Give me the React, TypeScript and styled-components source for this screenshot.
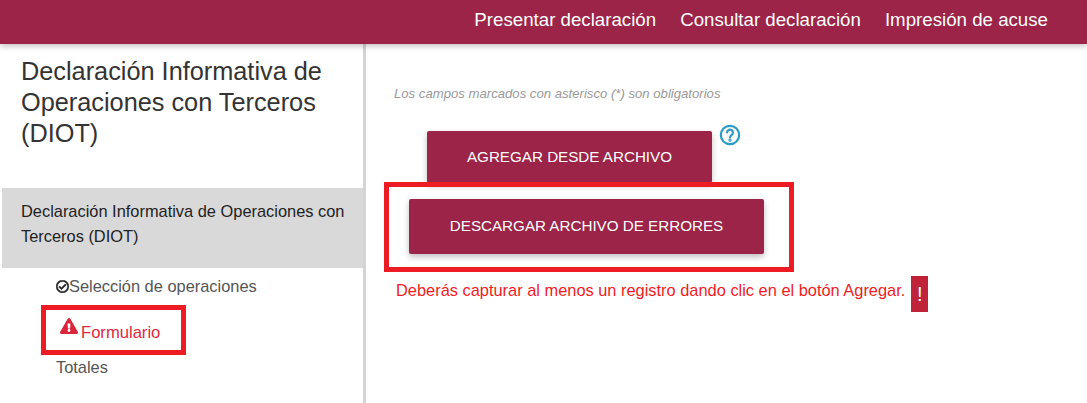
import React from 'react';
import styled, { createGlobalStyle } from 'styled-components';
import { FaExclamationTriangle, FaRegCheckCircle } from 'react-icons/fa';

const GlobalStyle = createGlobalStyle`
  html, body {
    margin: 0;
    padding: 0;
    background: #fff;
    overflow: hidden;
  }
  body {
    font-family: "Liberation Sans", Arial, sans-serif;
  }
`;

const Page = styled.div`
  width: 1087px;
  height: 403px;
  display: flex;
  flex-direction: column;
`;

const Header = styled.header`
  height: 44px;
  flex: none;
  background: #9b2448;
  box-shadow: 0 2px 6px rgba(0, 0, 0, 0.25);
  display: flex;
  justify-content: flex-end;
  align-items: center;
  gap: 24px;
  padding: 0 39px 4px 0;
  box-sizing: border-box;
  position: relative;
`;

const NavLink = styled.a`
  color: #fff;
  font-size: 18.7px;
`;

const Body = styled.div`
  flex: 1;
  display: flex;
  min-height: 0;
`;

const Sidebar = styled.aside`
  width: 366px;
  flex: none;
  box-sizing: border-box;
  border-right: 3px solid #d4d4d4;
  padding: 12px 0 0 2px;
`;

const Title = styled.h1`
  margin: 0 0 39px 19px;
  font-size: 25.3px;
  line-height: 31px;
  font-weight: 400;
  color: #333;
`;

const ActiveSection = styled.div`
  background: #d9d9d9;
  height: 80px;
  box-sizing: border-box;
  padding: 11px 12px 0 19px;
  font-size: 16.4px;
  line-height: 25px;
  color: #222;
`;

const StepList = styled.div`
  padding: 8px 0 0 39px;
`;

const Step = styled.div`
  display: flex;
  align-items: center;
  height: 20px;
  padding-left: 15px;
  font-size: 16.4px;
  color: #555;
`;

const CheckIcon = styled(FaRegCheckCircle)`
  width: 13px;
  height: 13px;
  flex: none;
  color: #222;
  stroke: #222;
  stroke-width: 24;
`;

const ErrorBox = styled.div`
  width: 145px;
  height: 50px;
  box-sizing: border-box;
  border: 5px solid #ed1c24;
  margin: 9px 0 2px;
  padding: 8px 0 0 14px;
  display: flex;
  align-items: flex-start;
  gap: 3px;
  color: #e0293f;
  font-size: 16.6px;
`;

const WarnIcon = styled(FaExclamationTriangle)`
  width: 18px;
  height: 16px;
  color: #d9263c;
`;

const ErrorLabel = styled.span`
  margin-top: 5px;
`;

const Main = styled.main`
  flex: 1;
  padding: 43px 0 0 18px;
`;

const Hint = styled.p`
  margin: 0 0 30px 10px;
  font-size: 13.15px;
  line-height: 14px;
  font-style: italic;
  color: #999;
`;

const TopAction = styled.div`
  display: flex;
  align-items: flex-start;
  margin-left: 43px;
  height: 51px;
`;

const ActionButton = styled.button<{ $width: number; $height: number }>`
  width: ${(p) => p.$width}px;
  height: ${(p) => p.$height}px;
  flex: none;
  background: #9b2448;
  color: #fff;
  border: none;
  border-radius: 2px;
  box-shadow: 0 3px 6px rgba(0, 0, 0, 0.25);
  font-family: "Liberation Sans", Arial, sans-serif;
  font-size: 15.2px;
  padding: 0 0 2px;
`;

const HelpIcon = styled.svg`
  width: 22px;
  height: 22px;
  margin: -7px 0 0 7px;
`;

const DownloadBox = styled.div`
  position: relative;
  width: 410px;
  height: 90px;
  box-sizing: border-box;
  border: 5px solid #ed1c24;
  padding: 12px 0 0 20px;
`;

const ErrorMessage = styled.div`
  display: flex;
  align-items: flex-start;
  margin: 4px 0 0 12px;
  color: #f01c24;
  font-size: 16.4px;
`;

const MessageText = styled.span`
  margin-top: 5px;
`;

const Badge = styled.span`
  width: 17px;
  height: 36px;
  margin-left: 6px;
  background: #c0223a;
  color: #fff;
  font-size: 20px;
  display: flex;
  align-items: center;
  justify-content: center;
`;

export default function App() {
  return (
    <Page>
      <GlobalStyle />
      <Header>
        <NavLink>Presentar declaración</NavLink>
        <NavLink>Consultar declaración</NavLink>
        <NavLink>Impresión de acuse</NavLink>
      </Header>
      <Body>
        <Sidebar>
          <Title>
            Declaración Informativa de
            <br />
            Operaciones con Terceros
            <br />
            (DIOT)
          </Title>
          <ActiveSection>
            Declaración Informativa de Operaciones con Terceros (DIOT)
          </ActiveSection>
          <StepList>
            <Step>
              <CheckIcon />
              Selección de operaciones
            </Step>
            <ErrorBox>
              <WarnIcon />
              <ErrorLabel>Formulario</ErrorLabel>
            </ErrorBox>
            <Step>Totales</Step>
          </StepList>
        </Sidebar>
        <Main>
          <Hint>Los campos marcados con asterisco (*) son obligatorios</Hint>
          <TopAction>
            <ActionButton $width={285} $height={52}>
              AGREGAR DESDE ARCHIVO
            </ActionButton>
            <HelpIcon viewBox="0 0 24 24" fill="none" stroke="#2b9cc3" strokeWidth="2.4">
              <circle cx="12" cy="12" r="10" />
              <path d="M8.8 9.3a3.2 3.2 0 1 1 4.8 2.8c-1 .6-1.6 1.2-1.6 2.6" strokeLinecap="round" />
              <circle cx="12" cy="17.6" r="0.6" fill="#2b9cc3" />
            </HelpIcon>
          </TopAction>
          <DownloadBox>
            <ActionButton $width={355} $height={55}>
              DESCARGAR ARCHIVO DE ERRORES
            </ActionButton>
          </DownloadBox>
          <ErrorMessage>
            <MessageText>
              Deberás capturar al menos un registro dando clic en el botón Agregar.
            </MessageText>
            <Badge>!</Badge>
          </ErrorMessage>
        </Main>
      </Body>
    </Page>
  );
}
